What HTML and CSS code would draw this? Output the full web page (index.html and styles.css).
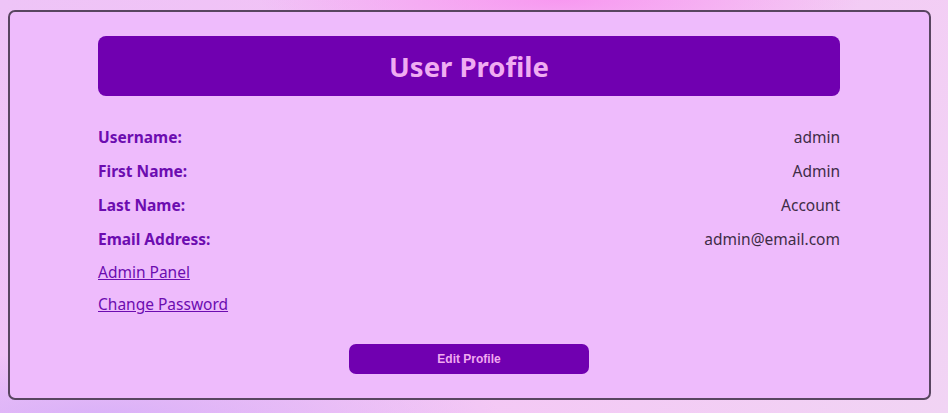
FILE: index.html
```html
<!DOCTYPE html>
<html lang="en">
<head>
<meta charset="utf-8">
<title>User Profile</title>
<link rel="stylesheet" href="styles.css">
</head>
<body>
<main class="card">
  <section class="profile">
    <h1 class="title">User Profile</h1>
    <div class="rows">
      <div class="row"><span class="label">Username:</span><span class="value">admin</span></div>
      <div class="row"><span class="label">First Name:</span><span class="value">Admin</span></div>
      <div class="row"><span class="label">Last Name:</span><span class="value">Account</span></div>
      <div class="row"><span class="label">Email Address:</span><span class="value">admin@email.com</span></div>
    </div>
    <div class="links">
      <a class="link" href="#">Admin Panel</a>
      <a class="link" href="#">Change Password</a>
    </div>
    <div class="actions">
      <button class="btn" type="button">Edit Profile</button>
    </div>
  </section>
</main>
</body>
</html>
```
FILE: styles.css
```css
html, body {
  margin: 0;
  padding: 0;
}
body {
  width: 948px;
  height: 413px;
  overflow: hidden;
  font-family: "Noto Sans", "DejaVu Sans", sans-serif;
  background:
    radial-gradient(ellipse 300px 50px at 560px 0px, rgba(248, 150, 240, 0.95), rgba(248, 150, 240, 0) 100%),
    radial-gradient(ellipse 400px 60px at 100px 413px, rgba(216, 176, 248, 0.9), rgba(216, 176, 248, 0) 100%),
    linear-gradient(120deg, #eec4f7 0%, #f2c2f6 35%, #f4c8f5 60%, #f1d4f4 100%);
  padding: 10px 0 0 8px;
  box-sizing: border-box;
}
.card {
  width: 923px;
  height: 390px;
  box-sizing: border-box;
  border: 2px solid #584560;
  border-radius: 7px;
  background: #eebbfc;
  padding: 24px 0 0 88px;
}
.profile {
  width: 742px;
  display: flex;
  flex-direction: column;
}
.title {
  margin: 0;
  height: 60px;
  display: flex;
  align-items: center;
  justify-content: center;
  background: #7000b0;
  border-radius: 8px;
  color: #f0acf2;
  font-size: 27.5px;
  font-weight: 700;
}
.rows {
  display: flex;
  flex-direction: column;
  gap: 10px;
  margin-top: 29px;
}
.row {
  display: flex;
  justify-content: space-between;
  align-items: center;
  height: 24px;
  font-size: 15.5px;
}
.label {
  font-weight: 700;
  color: #6c0cb0;
}
.value {
  color: #3e2c46;
}
.links {
  display: flex;
  flex-direction: column;
  align-items: flex-start;
  gap: 8px;
  margin-top: 9px;
}
.link {
  font-size: 15.5px;
  line-height: 24px;
  color: #6c0cb0;
  text-decoration: underline;
}
.actions {
  display: flex;
  justify-content: center;
  margin-top: 28px;
}
.btn {
  width: 240px;
  height: 30px;
  border: none;
  border-radius: 7px;
  background: #7000b0;
  color: #f0aaf0;
  font-family: "Liberation Sans", Arial, sans-serif;
  font-weight: 700;
  font-size: 12px;
  padding: 0;
}
```
